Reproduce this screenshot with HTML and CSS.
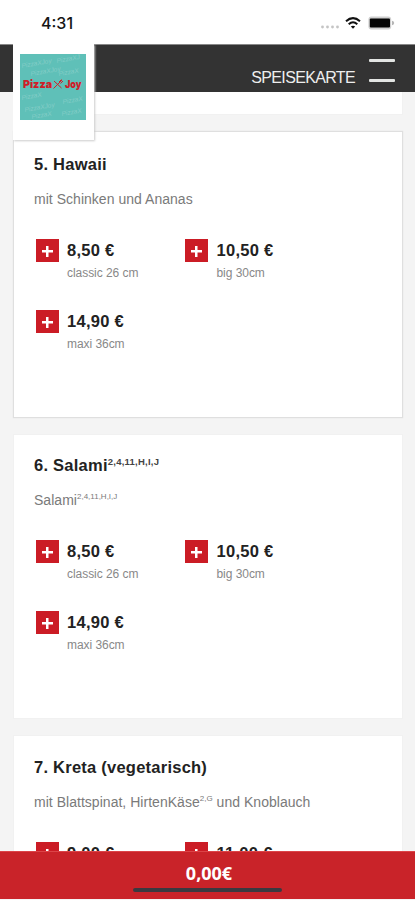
FILE: index.html
```html
<!DOCTYPE html>
<html lang="de">
<head>
<meta charset="utf-8">
<title>Pizza Joy – Speisekarte</title>
<link rel="stylesheet" href="styles.css">
</head>
<body>
<div class="phone">
  <div class="status">
    <span class="time">4:31</span>
    <svg class="signal" width="20" height="4" viewBox="0 0 20 4" fill="#c4c4c4"><circle cx="2.5" cy="2" r="1.4"/><circle cx="7.5" cy="2" r="1.4"/><circle cx="12.5" cy="2" r="1.4"/><circle cx="17.5" cy="2" r="1.4"/></svg>
    <svg class="wifi" width="16" height="12" viewBox="0 0 16 12" fill="none" stroke="#111" stroke-width="2"><path d="M1 4.3Q8-2 15 4.3"/><path d="M3.7 7.3Q8 3.3 12.3 7.3"/><path d="M8 11.7L5.8 9.5Q8 7.9 10.2 9.5Z" fill="#111" stroke="none"/></svg>
    <svg class="battery" width="27" height="14" viewBox="0 0 27 14"><rect x=".4" y=".6" width="22.8" height="12.8" rx="3" fill="#d0d0d0"/><rect x="1.8" y="2.5" width="20.2" height="9" rx="1" fill="#050505"/><path d="M24 4.8Q26.2 5.2 26.2 7T24 9.2Z" fill="#b5b5b5"/></svg>
  </div>
  <header class="bar">
    <div class="logo-box">
      <svg width="66" height="66" viewBox="0 0 66 66">
        <rect width="66" height="66" fill="#5fc0b8"/>
        <g class="pattern">
          <text transform="translate(2 14) rotate(-10)">PizzaXJoy</text>
          <text transform="translate(37 9) rotate(-10)">PizzaXJ</text>
          <text transform="translate(11 22) rotate(-10)">PizzaXJoy</text>
          <text transform="translate(39 22) rotate(-10)">PizzaX</text>
          <text transform="translate(2 46) rotate(-10)">PizzaX</text>
          <text transform="translate(5 58) rotate(-10)">PizzaXJoy</text>
          <text transform="translate(43 50) rotate(-10)">PizzaX</text>
          <text transform="translate(12 65) rotate(-10)">PizzaX</text>
          <text transform="translate(42 62) rotate(-10)">PizzaX</text>
        </g>
        <text class="brand" x="3" y="33.5" textLength="29" lengthAdjust="spacingAndGlyphs">Pizza</text>
        <path d="M34 27L41.5 34M33.5 34.5L42 26M40.5 29.5L43 27M39 28L41.5 25.5" stroke="#cf2029" stroke-width="1" fill="none"/>
        <text class="brand" x="45" y="33.5" textLength="16.5" lengthAdjust="spacingAndGlyphs">Joy</text>
      </svg>
    </div>
    <span class="nav">SPEISEKARTE</span>
    <div class="burger"><i></i><i></i></div>
  </header>
  <main class="list">
    <div class="card prev"></div>
    <section class="card first">
      <h2>5. Hawaii</h2>
      <p>mit Schinken und Ananas</p>
      <div class="sizes">
        <div class="size"><button><b></b></button><div><strong>8,50 €</strong><small>classic 26 cm</small></div></div>
        <div class="size"><button><b></b></button><div><strong>10,50 €</strong><small>big 30cm</small></div></div>
        <div class="size"><button><b></b></button><div><strong>14,90 €</strong><small>maxi 36cm</small></div></div>
      </div>
    </section>
    <section class="card">
      <h2>6. Salami<sup>2,4,11,H,I,J</sup></h2>
      <p>Salami<sup>2,4,11,H,I,J</sup></p>
      <div class="sizes">
        <div class="size"><button><b></b></button><div><strong>8,50 €</strong><small>classic 26 cm</small></div></div>
        <div class="size"><button><b></b></button><div><strong>10,50 €</strong><small>big 30cm</small></div></div>
        <div class="size"><button><b></b></button><div><strong>14,90 €</strong><small>maxi 36cm</small></div></div>
      </div>
    </section>
    <section class="card last">
      <h2>7. Kreta (vegetarisch)</h2>
      <p>mit Blattspinat, HirtenKäse<sup>2,G</sup> und Knoblauch</p>
      <div class="sizes">
        <div class="size"><button><b></b></button><div><strong>9,00 €</strong></div></div>
        <div class="size"><button><b></b></button><div><strong>11,00 €</strong></div></div>
      </div>
    </section>
  </main>
  <footer class="total"><span>0,00€</span><i class="home"></i></footer>
</div>
</body>
</html>
```
FILE: styles.css
```css
* { box-sizing: border-box; }
body { margin: 0; font-family: "Liberation Sans", Arial, sans-serif; background: #f4f4f4; }
.phone { width: 415px; height: 900px; display: flex; flex-direction: column; overflow: hidden; }
.status { height: 44px; flex: none; background: #fff; display: flex; align-items: center; padding: 2px 20px 0 41px; }
.time { font: 500 16px/20px Inter, sans-serif; color: #151515; flex: 1; }
.signal { margin: 8px 5px 0 0; }
.wifi { margin-right: 7px; }
.bar { height: 48px; flex: none; background: #333; border-top: 1px solid #888; position: relative; display: flex; justify-content: flex-end; padding-right: 20px; }
.logo-box { position: absolute; left: 13px; top: -1px; width: 81px; height: 96px; padding: 10px 7px; background: #fff; box-shadow: 1px 1px 2px #ccc; clip-path: inset(0 -4px -4px 0); }
.logo-box svg { display: block; }
.pattern { font: italic 6.5px "Liberation Sans", sans-serif; fill: #84cdc7; }
.brand { font: 900 11px Inter, sans-serif; fill: #cf1d28; }
.nav { color: #eee; font-size: 16px; line-height: 20px; margin: 23px 14px 0 0; letter-spacing: -.65px; }
.burger { width: 26px; padding-top: 14px; display: flex; flex-direction: column; gap: 17px; }
.burger i { height: 3px; border-radius: 1px; background: #e2e4e2; }
.list { flex: 1; min-height: 0; overflow: hidden; padding: 0 12px 0 13px; }
.card { height: 285px; margin-bottom: 16px; background: #fff; border: 1px solid #f1f1f1; padding: 20px 20px 0; }
.card.prev { height: 23px; border-top: 0; padding: 0; }
.card.first { height: 287px; border: 1px solid #dfdfdf; box-shadow: 0 0 1px #ddd; padding-top: 22px; }
.card.last { padding-top: 21px; }
h2 { margin: 0; font-size: 16.5px; line-height: 20px; font-weight: 700; color: #222; letter-spacing: .24px; white-space: nowrap; }
sup { line-height: 0; vertical-align: baseline; position: relative; top: -6px; }
h2 sup { font-size: 9.5px; letter-spacing: .25px; color: #444; }
p { margin: 16px 0 0; font-size: 14px; line-height: 18px; color: #7a7a7a; letter-spacing: .03px; white-space: nowrap; }
p sup { font-size: 8px; letter-spacing: 0; }
.sizes { display: grid; grid-template-columns: 149.5px 150px; grid-auto-rows: 71px; padding: 31px 0 0 1.5px; }
.size { display: flex; gap: 8.5px; }
button { width: 23px; height: 23px; flex: none; border: 0; padding: 0; background: #cb1c25; display: flex; align-items: center; justify-content: center; }
button b { width: 11px; height: 11px; margin: 1px 0 0 0; background: linear-gradient(#fff, #fff) center / 11px 2.5px no-repeat, linear-gradient(#fff, #fff) center / 2.5px 11px no-repeat; }
strong { display: block; font-size: 16.5px; line-height: 23px; color: #222; letter-spacing: .28px; white-space: nowrap; }
small { display: block; font-size: 12px; line-height: 14px; margin-top: 4px; color: #888; letter-spacing: -.05px; white-space: nowrap; }
.total { height: 48px; flex: none; background: #c92329; border-top: 1px solid #dc4448; color: #fff; display: flex; flex-direction: column; align-items: center; padding: 9px 0 0 3px; margin-bottom: 1px; }
.total span { font: 700 18px/24px "Open Sans", sans-serif; letter-spacing: 0; }
.home { width: 149px; height: 4px; border-radius: 2px; background: #3b3940; margin: 3px 0 0 -3px; }
```
